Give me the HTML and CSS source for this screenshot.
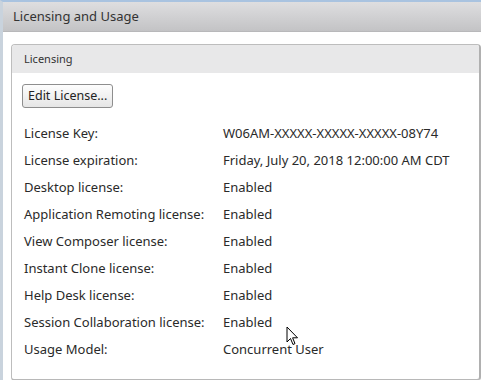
FILE: index.html
```html
<!DOCTYPE html>
<html>
<head>
<meta charset="utf-8">
<link rel="stylesheet" href="styles.css">
</head>
<body>
<div class="page">
  <div class="titlebar">Licensing and Usage</div>
  <div class="content">
    <div class="panel">
      <div class="panel-head">Licensing</div>
      <div class="panel-body">
        <button class="btn">Edit License...</button>
        <div class="rows">
          <div class="label">License Key:</div><div class="value">W06AM-XXXXX-XXXXX-XXXXX-08Y74</div>
          <div class="label">License expiration:</div><div class="value">Friday, July 20, 2018 12:00:00 AM CDT</div>
          <div class="label">Desktop license:</div><div class="value">Enabled</div>
          <div class="label">Application Remoting license:</div><div class="value">Enabled</div>
          <div class="label">View Composer license:</div><div class="value">Enabled</div>
          <div class="label">Instant Clone license:</div><div class="value">Enabled</div>
          <div class="label">Help Desk license:</div><div class="value">Enabled</div>
          <div class="label">Session Collaboration license:</div><div class="value">Enabled</div>
          <div class="label">Usage Model:</div><div class="value">Concurrent User</div>
        </div>
      </div>
    </div>
  </div>
  <svg class="cursor" width="13" height="20" viewBox="0 0 13 20">
    <path d="M1 1 L1 16 L4.5 12.5 L7 18.5 L9 17.6 L6.6 11.8 L11.5 11.8 Z" fill="#fff" stroke="#000" stroke-width="1" stroke-linejoin="miter"/>
  </svg>
</div>
</body>
</html>
```
FILE: styles.css
```css
html, body {
  margin: 0;
  padding: 0;
  background: #fff;
}
.page {
  position: relative;
  width: 481px;
  height: 380px;
  overflow: hidden;
  font-family: "Noto Sans", "DejaVu Sans", sans-serif;
  color: #222;
  border-left: 3px solid #c9d3dd;
  border-top: 2px solid #a9c3e0;
  box-sizing: border-box;
}
.titlebar {
  height: 29px;
  line-height: 28px;
  padding-left: 10px;
  font-size: 13px;
  color: #333;
  background: linear-gradient(#dedee0, #c3c3c5);
  border-bottom: 1px solid #b8b8ba;
}
.content {
  padding: 12px 0 0 8px;
}
.panel {
  border: 1px solid #bdbdbd;
  border-right: 2px solid #b0b0b0;
  border-bottom: 2px solid #b8b8b8;
  border-radius: 4px;
  height: 337px;
  box-sizing: border-box;
  overflow: hidden;
}
.panel-head {
  height: 28px;
  line-height: 28px;
  padding-left: 12px;
  font-size: 11px;
  color: #333;
  background: #e8e8e9;
}
.panel-body {
  padding: 10px 0 0 10px;
}
.btn {
  font-family: "Noto Sans", "DejaVu Sans", sans-serif;
  font-size: 12.5px;
  color: #222;
  height: 24px;
  padding: 0 5px;
  border: 1px solid #8e8e8e;
  border-radius: 3px;
  background: linear-gradient(#fdfdfd, #e6e6e6);
  line-height: 20px;
}
.rows {
  display: grid;
  grid-template-columns: 199px auto;
  grid-auto-rows: 27px;
  margin-top: 12px;
  padding-left: 2px;
  font-size: 13px;
  line-height: 27px;
  color: #2a2a2a;
}
.cursor {
  position: absolute;
  left: 283px;
  top: 324px;
}
```
